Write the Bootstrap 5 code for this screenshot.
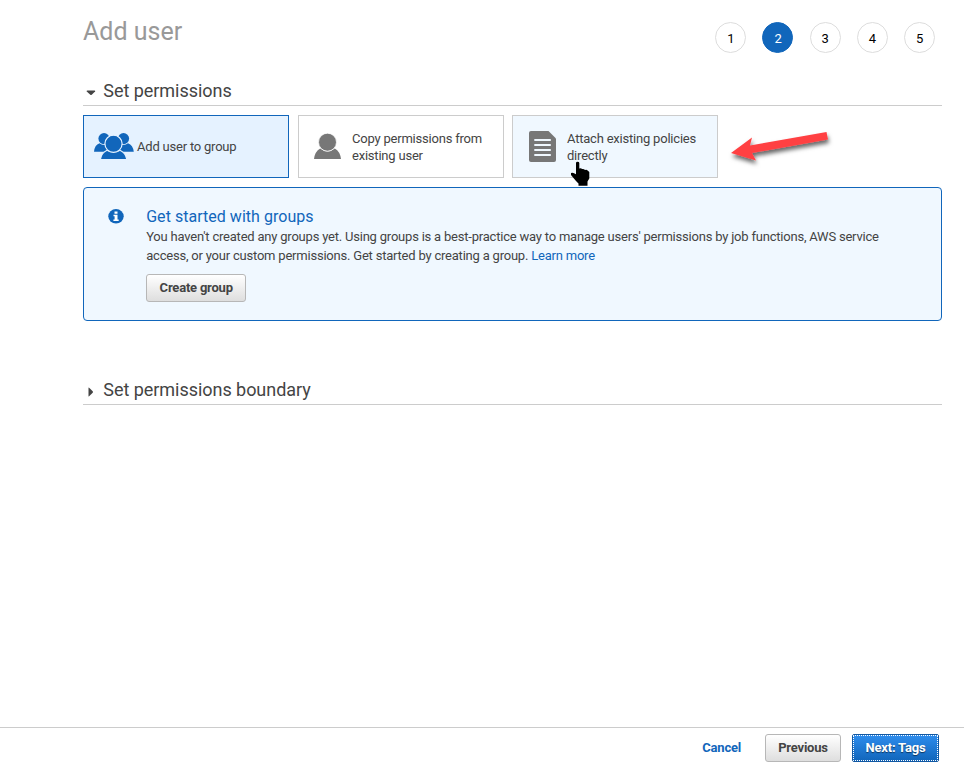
<!DOCTYPE html>
<html lang="en">
<head>
<meta charset="utf-8">
<meta name="viewport" content="width=device-width, initial-scale=1">
<title>Add user</title>
<link href="https://cdn.jsdelivr.net/npm/bootstrap@5.3.0/dist/css/bootstrap.min.css" rel="stylesheet">
<style>
body{font-family:Roboto,"Liberation Sans",sans-serif;font-size:13px;line-height:17px;letter-spacing:-.21px;color:#444;background:#fff;overflow:hidden}
.page-main{padding:0 22px 0 83px}
.page-head{height:77px;padding:16px 7px 0 0}
.page-title{font-size:25px;line-height:32px;font-weight:400;letter-spacing:0;color:#999}
.steps{gap:16.2px;padding-top:6px}
.step{width:31px;height:31px;border:1px solid #ddd;color:#000;padding-top:2px}
.step.current{background:#1166bb;border-color:#1166bb;color:#fff}
.section-head{height:29px;border-bottom:1px solid #ccc;padding:0 0 1px 3px}
.section-head h2{font-size:18px;line-height:26px;font-weight:400;letter-spacing:-.04px;padding-left:7.3px}
.options{gap:9px;margin-top:9px}
.option{width:206px;height:63px;border:1px solid #ccc;border-radius:0;background:#fff;font-size:13px;line-height:17px;letter-spacing:-.21px;color:#444;text-align:left}
.option.chosen{background:#e5f2ff;border-color:#1166bb}
.option.hovered{background:#f0f8ff;margin-left:-1px}
.ico-cell{width:53px;padding-left:10px}
.ico-cell.narrow{padding-left:15px}
.hovered .ico-cell{width:54px;padding-left:16px}
.chosen .ico-cell,.ico-cell.narrow{padding-bottom:1px}
.info-panel{margin-top:9px;height:134px;border:1px solid #1166bb;border-radius:4px;background:#f0f8ff;padding:19px 40px 0 24px}
.info-panel h3{font-size:16px;line-height:20px;font-weight:400;letter-spacing:.03px;color:#1166bb}
.info-panel p{line-height:19px}
.info-body{padding-left:21.2px}
a{color:#1166bb}
.btn-plain,.btn-main{font-size:13px;line-height:18px;font-weight:700;letter-spacing:-.21px;border-radius:3px;height:28px;padding:4px 12px;color:#444;border:1px solid #b7b7b7;background:linear-gradient(#fff,#dedede)}
.btn-create{width:100px;margin-top:9px}
.btn-prev{width:76px}
.btn-main{width:87px;color:#fff;border:1px solid #1258a1;outline:1px dotted #fff;outline-offset:-2px;background:linear-gradient(#2e8ded,#1166bb);text-shadow:0 1px 1px #0008;border-radius:2px;margin-left:11px}
.boundary{margin-top:55px}
.page-foot{height:37px;border-top:1px solid #ccc;padding:6px 25px 0 0}
.cancel-link{line-height:28px;margin-right:24px}
.overlay-arrow{left:721px;top:122px}
.overlay-hand{left:571px;top:161px}
</style>
<script src="https://cdn.jsdelivr.net/npm/bootstrap@5.3.0/dist/js/bootstrap.bundle.min.js"></script>
</head>
<body class="vh-100 d-flex flex-column position-relative">
<main class="page-main flex-grow-1">
  <header class="page-head d-flex justify-content-between align-items-start">
    <h1 class="page-title mb-0">Add user</h1>
    <div class="steps d-flex">
      <span class="step rounded-circle d-flex align-items-center justify-content-center">1</span>
      <span class="step current rounded-circle d-flex align-items-center justify-content-center">2</span>
      <span class="step rounded-circle d-flex align-items-center justify-content-center">3</span>
      <span class="step rounded-circle d-flex align-items-center justify-content-center">4</span>
      <span class="step rounded-circle d-flex align-items-center justify-content-center">5</span>
    </div>
  </header>
  <div class="section-head d-flex align-items-center">
    <svg width="10" height="10" class="mt-1"><path d="M.5 3.2Q.5 2.5 1.5 2.5h7q1 0 .6.9L5.7 6.8Q5 7.4 4.3 6.8Z" fill="#444"/></svg>
    <h2 class="mb-0">Set permissions</h2>
  </div>
  <div class="options d-flex">
    <button class="option chosen p-0 d-flex align-items-center">
      <span class="ico-cell d-flex flex-shrink-0"><svg width="40" height="26" viewBox="0 0 40 26">
        <g fill="#1166bb"><circle cx="10" cy="5.6" r="5.6"/><circle cx="29.5" cy="5.6" r="5.6"/>
        <path d="M0 18.8Q.5 12 5.5 10.2Q9 13.3 14 11v7.8ZM39.8 18.8Q39 12 34 10.2Q30.5 13.3 25.5 11v7.8Z"/></g>
        <g fill="#1166bb" stroke="#e5f2ff" stroke-width="1.2"><path d="M6.4 26.7Q7 20.1 13 17.2Q19.5 21.2 26 17.2Q32 20.1 32.8 26.7Z"/><circle cx="19.5" cy="10.8" r="8.6"/></g>
      </svg></span>
      <span>Add user to group</span>
    </button>
    <button class="option p-0 d-flex align-items-center">
      <span class="ico-cell narrow d-flex flex-shrink-0"><svg width="27" height="26" viewBox="0 0 27 26" fill="#777">
        <path d="M0 26Q.8 18.5 6.2 15.4Q13.5 21.4 20.8 15.4Q26.2 18.5 27 26Z"/><circle cx="13.5" cy="9.2" r="9" stroke="#fff" stroke-width=".8"/>
      </svg></span>
      <span>Copy permissions from<br>existing user</span>
    </button>
    <button class="option hovered p-0 d-flex align-items-center">
      <span class="ico-cell d-flex flex-shrink-0"><svg width="27" height="31" viewBox="0 0 27 31">
        <path d="M2 0h17.5L27 7.5V29q0 2-2 2H2q-2 0-2-2V2Q0 0 2 0Z" fill="#777"/>
        <path d="M5.3 9h16.5M5.3 14h16.5M5.3 19h16.5M5.3 24h16.5" stroke="#f0f8ff" stroke-width="2"/>
      </svg></span>
      <span>Attach existing policies<br>directly</span>
    </button>
  </div>
  <section class="info-panel d-flex align-items-start">
    <svg class="flex-shrink-0" width="17" height="19" viewBox="0 -2 17 19"><ellipse cx="8" cy="7.3" rx="7.7" ry="7.3" fill="#1166bb"/><path d="M6.5 2.4h3v2.3h-3ZM5.5 5.8h4v4.8h1.2V12H5.4v-1.4h1.2V7.2H5.5Z" fill="#fff"/></svg>
    <div class="info-body">
      <h3 class="mb-0">Get started with groups</h3>
      <p class="mb-0 text-nowrap">You haven't created any groups yet. Using groups is a best-practice way to manage users' permissions by job functions, AWS service<br>access, or your custom permissions. Get started by creating a group. <a href="#" class="text-decoration-none">Learn more</a></p>
      <button class="btn btn-plain btn-create">Create group</button>
    </div>
  </section>
  <div class="section-head boundary d-flex align-items-center">
    <svg width="10" height="10" class="mt-1"><path d="M2.5 1.1Q2.5.2 3.4.9L6.7 4.3Q7.3 5 6.7 5.7L3.4 9.1Q2.5 9.8 2.5 8.9Z" fill="#444"/></svg>
    <h2 class="mb-0">Set permissions boundary</h2>
  </div>
</main>
<footer class="page-foot d-flex justify-content-end align-items-start">
  <a href="#" class="cancel-link fw-bold text-decoration-none">Cancel</a>
  <button class="btn btn-plain btn-prev">Previous</button>
  <button class="btn btn-main">Next: Tags</button>
</footer>
<svg class="overlay-arrow position-absolute pe-none" width="116" height="50" viewBox="0 0 116 50">
  <defs><filter id="soft" x="-20%" y="-30%" width="140%" height="180%"><feDropShadow dx="1" dy="3.5" stdDeviation="2" flood-color="#000" flood-opacity=".6"/></filter></defs>
  <path filter="url(#soft)" d="M10 31L31 15.5L29 23.5L105.5 10L107 17.5L31 31L35 38.5Z" fill="#ff4043"/>
</svg>
<svg class="overlay-hand position-absolute pe-none" width="20" height="26" viewBox="0 0 20 26">
  <path d="M5 2Q5 .7 6.5.7Q8.3.7 8.3 2V7.5Q9.7 6.7 11.2 8Q12.8 7.5 14 9Q15.8 8.3 16.6 9.6L18.3 11V17.5L16.5 20.5V24.8H7.5V22.5L5 20L0 14V12Q2 11 5 13.2Z" fill="#000"/>
</svg>
</body>
</html>
